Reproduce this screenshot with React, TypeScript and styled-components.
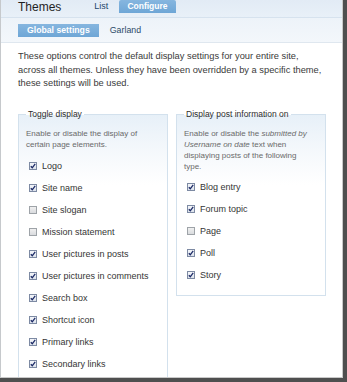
import React from "react";
import styled, { createGlobalStyle } from "styled-components";

const Global = createGlobalStyle`
  html, body { margin: 0; padding: 0; background: #ffffff; }
  body { font-family: "Liberation Sans", Arial, sans-serif; color: #3b3b3b; }
  * { box-sizing: border-box; }
`;

const Frame = styled.div`
  width: 347px;
  height: 382px;
  border-right: 4px solid #4f4f4f;
  border-bottom: 4px solid #4f4f4f;
  overflow: hidden;
  background: #fff;
`;

const Page = styled.div`
  width: 343px;
  height: 378px;
  border-left: 1px solid #c6c9cc;
  border-right: 1px solid #c9c9c9;
  border-bottom: 1px solid #c9c9c9;
  overflow: hidden;
  background: #fff;
`;

const TopBar = styled.div`
  height: 18px;
  display: flex;
  align-items: flex-start;
  padding-left: 17px;
  background: linear-gradient(#e2ebf5, #e8f0f8);
  border-bottom: 1px solid #d6e2ee;
`;

const Title = styled.h1`
  margin: 0 25px 0 0;
  font-family: "Liberation Sans", Arial, sans-serif;
  font-weight: normal;
  font-size: 12px;
  line-height: 14px;
  color: #1f1f1f;
`;

const Tabs = styled.div`
  display: flex;
  gap: 3px;
`;

const Tab = styled.span<{ $active?: boolean }>`
  height: 13px;
  padding: 0 8px;
  font-size: ${(p) => (p.$active ? "8.5px" : "9px")};
  font-weight: ${(p) => (p.$active ? "bold" : "normal")};
  line-height: 13px;
  color: ${(p) => (p.$active ? "#ffffff" : "#23466b")};
  background: ${(p) => (p.$active ? "linear-gradient(#86b6df, #6ea6d6)" : "transparent")};
  border-radius: 2px 2px 0 0;
`;

const SubBar = styled.div`
  height: 25px;
  display: flex;
  align-items: center;
  gap: 2px;
  padding-left: 17px;
  background: linear-gradient(#edf3f9, #f3f7fb);
  border-bottom: 1px solid #dfe7ef;
`;

const SubTab = styled.span<{ $active?: boolean }>`
  height: 13px;
  padding: 0 9px;
  font-size: ${(p) => (p.$active ? "8.7px" : "8.8px")};
  font-weight: ${(p) => (p.$active ? "bold" : "normal")};
  line-height: 13px;
  color: ${(p) => (p.$active ? "#ffffff" : "#2c4a68")};
  background: ${(p) => (p.$active ? "linear-gradient(#86b6df, #6ea6d6)" : "transparent")};
`;

const Intro = styled.p`
  margin: 7px 17px 0 17px;
  font-size: 9.3px;
  line-height: 13.7px;
  color: #3a3a3a;
`;

const Columns = styled.div`
  display: grid;
  grid-template-columns: 150px 150px;
  column-gap: 8px;
  align-items: start;
  margin: 18px 0 0 17px;
`;

const Fieldset = styled.fieldset`
  margin: 0;
  padding: 8px 7px 9px 7px;
  border: 1px solid #d3e1ed;
  background: linear-gradient(#e7f0f8 0px, #f6f9fc 40px, #ffffff 70px);
  min-width: 0;
`;

const Legend = styled.legend`
  margin-left: 0;
  padding: 0 2px;
  font-size: 8.5px;
  line-height: 11px;
  color: #2e2e2e;
`;

const Desc = styled.div<{ $gap: number }>`
  font-size: 8px;
  line-height: 11px;
  color: #6a6a6a;
  margin-bottom: ${(p) => p.$gap}px;
  padding-right: 2px;
  em { font-style: italic; }
`;

const Item = styled.label`
  display: flex;
  align-items: center;
  height: 22px;
  margin-left: 3px;
  gap: 5px;
  font-size: 9px;
  color: #353535;
`;

const Box = styled.span<{ $checked: boolean }>`
  width: 8px;
  height: 8px;
  flex: none;
  display: flex;
  align-items: center;
  justify-content: center;
  border: 1px solid ${(p) => (p.$checked ? "#7d8aa3" : "#9ea3a8")};
  background: ${(p) => (p.$checked ? "linear-gradient(#f4f6fa, #dde3ec)" : "linear-gradient(#f0f0f0, #d9dbde)")};
`;

function Check({ checked, label }: { checked: boolean; label: string }) {
  return (
    <Item>
      <Box $checked={checked}>
        {checked && (
          <svg width="6" height="6" viewBox="0 0 6 6">
            <path d="M0.8 3.2 L2.3 4.8 L5.2 0.9" fill="none" stroke="#1c2a66" strokeWidth="1.3" />
          </svg>
        )}
      </Box>
      {label}
    </Item>
  );
}

const toggles: [string, boolean][] = [
  ["Logo", true],
  ["Site name", true],
  ["Site slogan", false],
  ["Mission statement", false],
  ["User pictures in posts", true],
  ["User pictures in comments", true],
  ["Search box", true],
  ["Shortcut icon", true],
  ["Primary links", true],
  ["Secondary links", true],
];

const posts: [string, boolean][] = [
  ["Blog entry", true],
  ["Forum topic", true],
  ["Page", false],
  ["Poll", true],
  ["Story", true],
];

export default function App() {
  return (
    <>
      <Global />
      <Frame>
        <Page>
          <TopBar>
            <Title>Themes</Title>
            <Tabs>
              <Tab>List</Tab>
              <Tab $active>Configure</Tab>
            </Tabs>
          </TopBar>
          <SubBar>
            <SubTab $active>Global settings</SubTab>
            <SubTab>Garland</SubTab>
          </SubBar>
          <Intro>
            These options control the default display settings for your entire site, across all themes. Unless they
            have been overridden by a specific theme, these settings will be used.
          </Intro>
          <Columns>
            <Fieldset>
              <Legend>Toggle display</Legend>
              <Desc $gap={5}>Enable or disable the display of certain page elements.</Desc>
              {toggles.map(([l, c]) => (
                <Check key={l} label={l} checked={c} />
              ))}
            </Fieldset>
            <Fieldset>
              <Legend>Display post information on</Legend>
              <Desc $gap={4}>
                Enable or disable the <em>submitted by Username on date</em> text when displaying posts of the
                following type.
              </Desc>
              {posts.map(([l, c]) => (
                <Check key={l} label={l} checked={c} />
              ))}
            </Fieldset>
          </Columns>
        </Page>
      </Frame>
    </>
  );
}
